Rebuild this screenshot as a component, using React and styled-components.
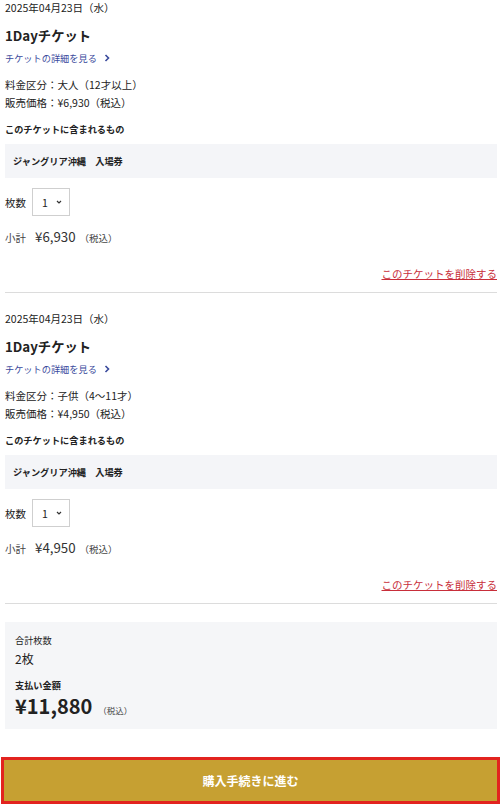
import styled, { createGlobalStyle } from "styled-components";

const GlobalStyle = createGlobalStyle`
  * { box-sizing: border-box; }
  body {
    margin: 0;
    background: #fff;
    color: #222;
    font-family: "Noto Sans CJK JP", "Noto Sans", sans-serif;
  }
`;

const Page = styled.div`
  width: 502px;
  padding: 0 5px;
`;

const Ticket = styled.section`
  border-bottom: 1px solid #dcdcdc;
  margin-bottom: 18px;
`;

const DateText = styled.div`
  font-size: 10.5px;
  line-height: 16px;
`;

const Title = styled.h2`
  margin: 10px 0 0;
  font-size: 13.3px;
  line-height: 20px;
  font-weight: 700;
`;

const DetailLink = styled.a`
  margin-top: 4px;
  display: flex;
  align-items: center;
  gap: 7px;
  font-size: 9.2px;
  line-height: 16px;
  color: #3a4a9c;
  text-decoration: none;
`;

const Info = styled.div`
  margin-top: 10px;
  font-size: 10.5px;
  line-height: 18px;
`;

const SubHead = styled.div`
  margin-top: 9px;
  font-size: 9.2px;
  line-height: 16px;
  font-weight: 700;
`;

const Included = styled.div`
  margin-top: 7px;
  height: 34px;
  padding: 0 8px;
  display: flex;
  align-items: center;
  background: #f4f5f8;
  font-size: 9.2px;
  font-weight: 700;
`;

const QtyRow = styled.div`
  margin-top: 10px;
  display: flex;
  align-items: center;
  gap: 6px;
  font-size: 10.5px;
`;

const Select = styled.div`
  width: 38px;
  height: 28px;
  border: 1px solid #cfcfcf;
  display: flex;
  align-items: center;
  justify-content: space-between;
  padding: 0 7px 0 9px;
  font-size: 10.5px;
`;

const Subtotal = styled.div`
  margin-top: 11px;
  display: flex;
  align-items: baseline;
  gap: 9px;
  font-size: 10.5px;
  line-height: 20px;
`;

const SubLabel = styled.span`
  color: #444;
`;

const Amount = styled.span`
  font-size: 13.3px;
  color: #333;
`;

const Tax = styled.span`
  font-size: ${(p) => p.size || 9.5}px;
  font-weight: 400;
  color: #444;
  margin-left: ${(p) => p.gap || 0}px;
`;

const DeleteRow = styled.div`
  margin-top: 17px;
  padding-bottom: 9px;
  text-align: right;
  font-size: 10.5px;
  line-height: 18px;
`;

const DeleteLink = styled.a`
  color: #c82e3a;
  text-decoration: underline;
`;

const Summary = styled.div`
  margin-top: 2px;
  background: #f5f6f8;
  padding: 10px 10px 6px;
`;

const SumLabel = styled.div`
  font-size: 9.2px;
  line-height: 16px;
  font-weight: ${(p) => (p.bold ? 700 : 400)};
  margin-top: ${(p) => p.top || 0}px;
`;

const SumCount = styled.div`
  margin-top: 2px;
  font-size: 12px;
  line-height: 18px;
`;

const Total = styled.div`
  display: flex;
  align-items: baseline;
  gap: 6px;
  font-size: 20px;
  line-height: 26px;
  font-weight: 700;
`;

const Button = styled.button`
  display: block;
  width: 499px;
  height: 47px;
  margin: 28px 0 0 -4px;
  background: #c6a032;
  border: 3px solid #e2231f;
  color: #fff;
  font-family: inherit;
  font-size: 12px;
  font-weight: 700;
`;

const Chevron = () => (
  <svg width="6" height="8" viewBox="0 0 6 8">
    <path d="M1.5 1l3 3-3 3" fill="none" stroke="currentColor" strokeWidth="1.6" />
  </svg>
);

const SmallChevron = () => (
  <svg width="6" height="5" viewBox="0 0 6 5">
    <path d="M1 1l2 2 2-2" fill="none" stroke="#333" strokeWidth="1.2" />
  </svg>
);

const tickets = [
  { kind: "大人（12才以上）", price: "¥6,930" },
  { kind: "子供（4〜11才）", price: "¥4,950" },
];

function TicketBlock({ kind, price }) {
  return (
    <Ticket>
      <DateText>2025年04月23日（水）</DateText>
      <Title>1Dayチケット</Title>
      <DetailLink href="#">
        チケットの詳細を見る <Chevron />
      </DetailLink>
      <Info>
        料金区分：{kind}
        <br />
        販売価格：{price}（税込）
      </Info>
      <SubHead>このチケットに含まれるもの</SubHead>
      <Included>ジャングリア沖縄　入場券</Included>
      <QtyRow>
        枚数
        <Select>
          1 <SmallChevron />
        </Select>
      </QtyRow>
      <Subtotal>
        <SubLabel>小計</SubLabel>
        <Amount>{price}</Amount>
        <Tax gap={-5}>（税込）</Tax>
      </Subtotal>
      <DeleteRow>
        <DeleteLink href="#">このチケットを削除する</DeleteLink>
      </DeleteRow>
    </Ticket>
  );
}

export default function App() {
  return (
    <Page>
      <GlobalStyle />
      {tickets.map((t) => (
        <TicketBlock key={t.kind} {...t} />
      ))}
      <Summary>
        <SumLabel>合計枚数</SumLabel>
        <SumCount>2枚</SumCount>
        <SumLabel bold top={9}>支払い金額</SumLabel>
        <Total>
          ¥11,880 <Tax size={8.5}>（税込）</Tax>
        </Total>
      </Summary>
      <Button>購入手続きに進む</Button>
    </Page>
  );
}
